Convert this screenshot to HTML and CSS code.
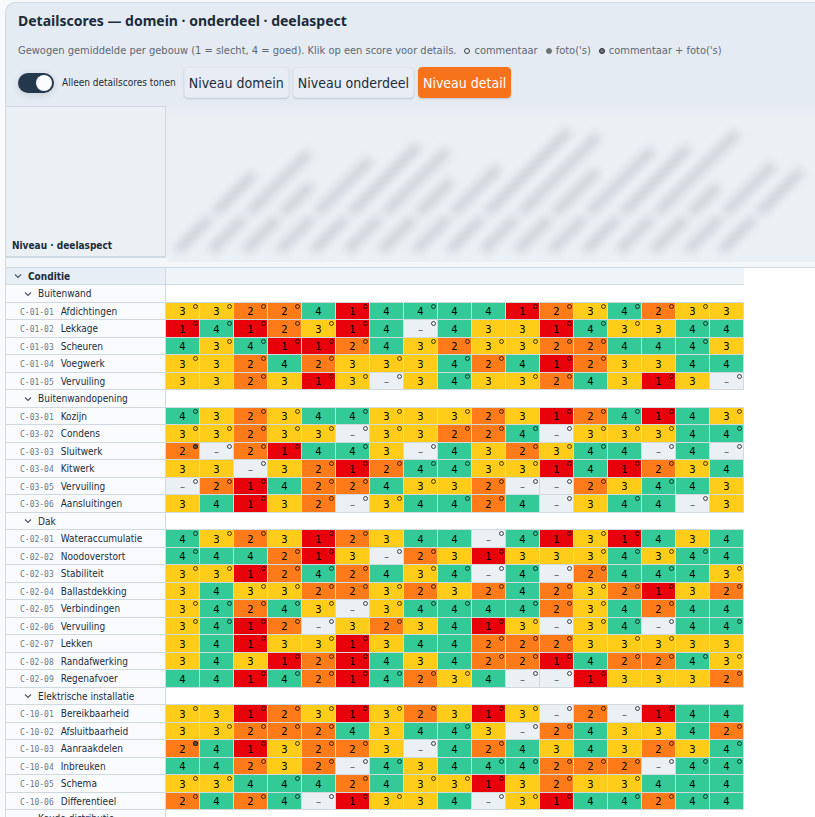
FILE: index.html
```html
<!DOCTYPE html>
<html lang="nl">
<head>
    <meta charset="utf-8">
    <title>Detailscores</title>
    <meta name="viewport" content="width=device-width, initial-scale=1.0">
    <link rel="stylesheet" href="styles.css">
</head>
<body>
    <main class="card">
        <header class="card-head">
            <h1 class="title">Detailscores — domein · onderdeel · deelaspect</h1>
            <p class="intro">
                <span>Gewogen gemiddelde per gebouw (1 = slecht, 4 = goed). Klik op een score voor details.</span>
                <span class="legend"><i class="dot"></i>commentaar</span>
                <span class="legend"><i class="dot dot-photo"></i>foto('s)</span>
                <span class="legend"><i class="dot dot-both"></i>commentaar + foto('s)</span>
            </p>
            <div class="toolbar">
                <label class="switch">
                    <input type="checkbox" checked>
                    Alleen detailscores tonen
                </label>
                <div class="levels">
                    <button type="button" class="level">Niveau domein</button>
                    <button type="button" class="level">Niveau onderdeel</button>
                    <button type="button" class="level active">Niveau detail</button>
                </div>
            </div>
        </header>
        <section class="matrix">
            <div class="matrix-head">
                <div class="corner">Niveau · deelaspect</div>
                <div class="names" id="names" aria-hidden="true"></div>
            </div>
            <table class="scores">
                <colgroup>
                    <col class="col-label">
                    <col span="17" class="col-score">
                </colgroup>
                <tbody id="rows"></tbody>
            </table>
        </section>
    </main>
    <script src="script.js"></script>
</body>
</html>
```

FILE: styles.css
```css
* {
    box-sizing: border-box;
}

body {
    margin: 0;
    padding: 2px 0 0 5px;
    height: 100vh;
    overflow: hidden;
    background: #f8fafc;
    color: #1c2b3a;
    font-family: "DejaVu Sans Condensed", "DejaVu Sans", sans-serif;
    font-stretch: condensed;
}

button,
input {
    font: inherit;
    color: inherit;
    margin: 0;
}

.card {
    height: 100%;
    overflow: hidden;
    background: #e5ebf3;
    border: 1px solid #d1d9e0;
    border-width: 1px 0 0 1px;
    border-top-left-radius: 10px;
}

.card-head {
    padding: 0 12px 8px;
}

.title {
    margin: 0;
    font-family: "Noto Sans", sans-serif;
    font-size: 14px;
    line-height: 35px;
    font-weight: bold;
}

.intro {
    display: flex;
    gap: 8px;
    margin: 0;
    font-size: 11px;
    line-height: 25px;
    color: #5d6773;
    white-space: nowrap;
}

.legend {
    display: flex;
    align-items: center;
    gap: 4px;
}

.dot {
    width: 6px;
    height: 6px;
    border: 1px solid #3a4148;
    border-radius: 50%;
}

.dot-photo {
    background: #6f7479;
    border-color: #6f7479;
}

.dot-both {
    background: #6f7479;
    border-color: #23282d;
}

.toolbar {
    display: flex;
    align-items: center;
    gap: 8px;
    padding-top: 4px;
}

.switch {
    display: flex;
    align-items: center;
    gap: 8px;
    font-size: 10px;
    white-space: nowrap;
}

.switch input {
    appearance: none;
    display: flex;
    width: 36px;
    height: 20px;
    padding: 2px;
    justify-content: flex-end;
    border-radius: 10px;
    background: #24384c;
    box-shadow: 0 2px 6px rgba(36, 56, 76, 0.15);
}

.switch input::before {
    content: "";
    width: 16px;
    height: 16px;
    border-radius: 50%;
    background: #fafcff;
}

.levels {
    display: flex;
    gap: 4px;
}

.level {
    height: 31px;
    padding: 0 4px;
    border: 1px solid #dfe5ee;
    border-radius: 4px;
    background: #e7ecf5;
    box-shadow: 0 1px 2px rgba(28, 43, 58, 0.18);
    font-size: 14px;
    white-space: nowrap;
}

.level.active {
    border-color: #f6731c;
    background: #f6731c;
    color: #fff;
}

.matrix {
    background: #fff;
}

.matrix-head {
    display: flex;
    height: 162px;
    background: linear-gradient(#e5ebf3, #ebf0f4 12px, #ebf0f4 150px, #f3f7fa 154px);
    border-bottom: 1px solid #d1d9e0;
}

.corner {
    display: flex;
    flex: none;
    align-items: flex-end;
    width: 160px;
    height: 152px;
    padding: 0 6px 5px;
    background: #ebf0f4;
    border: 1px solid #d1d9e0;
    border-width: 1px 1px 2px 0;
    font-size: 10px;
    font-weight: bold;
    white-space: nowrap;
}

.names {
    display: flex;
    flex: 1;
    height: 156px;
    margin-left: 2px;
    padding-left: 4px;
    align-items: flex-end;
    background: linear-gradient(#e5ebf3, #ebf0f4 12px);
    overflow: hidden;
}

.name {
    display: flex;
    flex: none;
    gap: 8px;
    width: 34px;
    height: 8px;
    margin-bottom: 10px;
    padding-left: 4px;
    transform: rotate(-45deg);
    transform-origin: 8px 4px;
    filter: blur(5px);
}

.name span {
    flex: none;
    width: 46px;
    height: 8px;
    background: #c6ccd4;
}

.scores {
    width: 738px;
    table-layout: fixed;
    border-collapse: separate;
    border-spacing: 0;
}

.col-label {
    width: 160px;
}

.col-score {
    width: 34px;
}

.scores tr {
    height: 17px;
}

.scores tr:nth-child(even) {
    height: 18px;
}

.scores th,
.scores td {
    padding: 0;
    border-bottom: 1px solid #d1d9e0;
    font-size: 10px;
    line-height: 15px;
    font-weight: normal;
}

.scores th {
    padding-left: 14px;
    border-right: 1px solid #d1d9e0;
    background: #f9fbff;
    text-align: left;
    white-space: nowrap;
}

.scores td {
    position: relative;
    height: 1px;
}

.scores .domain th {
    padding-left: 8px;
    background: #e7eef5;
    font-weight: bold;
}

.scores .domain td {
    background: #eff4f8;
}

.scores .group th {
    padding-left: 18px;
}

.toggle {
    display: flex;
    align-items: center;
    gap: 6px;
    padding: 0;
    border: 0;
    background: none;
    line-height: 15px;
}

.toggle svg {
    width: 8px;
    height: 8px;
    fill: none;
    stroke: #4a5866;
    stroke-width: 1.2;
}

.code {
    margin-right: 7px;
    font-family: "DejaVu Sans Mono", monospace;
    font-size: 8px;
    line-height: 8px;
    color: #6f7883;
}

.scores .score {
    border-right: 1px solid #d1d9e0;
}

.score button {
    display: block;
    width: 100%;
    height: 100%;
    padding: 1px 0 0;
    border: 0;
    background: none;
    font-family: "DejaVu Sans", sans-serif;
    font-stretch: normal;
    line-height: 15px;
    text-align: center;
}

.s1 {
    background: #e8000b;
    color: #000;
}

.s2 {
    background: #ff7b1a;
    color: #000;
}

.s3 {
    background: #ffcc19;
    color: #000;
}

.s4 {
    background: #34ca97;
    color: #000;
}

.s0 {
    background: #ebf0f5;
    color: #4a5866;
}

.mark {
    position: absolute;
    top: 1px;
    right: 1px;
    width: 5px;
    height: 5px;
    border: 1px solid rgba(0, 0, 0, 0.7);
    border-radius: 50%;
}

.mark-both {
    background: rgba(60, 70, 80, 0.8);
}
```

FILE: script.js
```js
// score per gebouw: o = commentaar, * = commentaar + foto('s)
const domain = {
    name: 'Conditie',
    groups: [
        ['Buitenwand', [
            ['C-01-01', 'Afdichtingen', '3o 3o 2o 2o 4 1o 4 4o 4 4 1o 2o 3o 4o 2o 3o 3'],
            ['C-01-02', 'Lekkage', '1o 4o 1o 2o 3o 1o 4 -o 4 3 3 1o 4o 3o 3 4o 4'],
            ['C-01-03', 'Scheuren', '4 3o 4o 1o 1o 2o 4 3o 2o 3o 3o 2o 2o 4 4 4o 3'],
            ['C-01-04', 'Voegwerk', '3o 3 2o 4 2o 3 3o 3 4o 2o 4 1o 2o 3 3 4 4'],
            ['C-01-05', 'Vervuiling', '3 3 2o 3 1o 3o -o 3 4o 3 3o 2o 4 3 1o 3 -o']
        ]],
        ['Buitenwandopening', [
            ['C-03-01', 'Kozijn', '4o 3 2o 3o 4 4o 3o 3 3o 2o 3 1o 2o 4o 1o 4 3o'],
            ['C-03-02', 'Condens', '3o 3o 2o 3o 3o -o 3o 3 2o 2o 4o -o 3o 3o 3o 4 4o'],
            ['C-03-03', 'Sluitwerk', '2* -o 2o 1o 4 4o 3 -o 4 3 2o 3o 4o 4 -o 4 -o'],
            ['C-03-04', 'Kitwerk', '3 3 -o 3 2o 1o 2o 4o 4o 3o 3o 1o 4 1o 2o 3o 4'],
            ['C-03-05', 'Vervuiling', '-o 2o 1o 4 2o 2o 4 3o 3 2o -o -o 2o 3 4o 4 3'],
            ['C-03-06', 'Aansluitingen', '3 4 1o 3 2o -o 3o 4 4o 2o 4 -o 3 4o 4 -o 3']
        ]],
        ['Dak', [
            ['C-02-01', 'Wateraccumulatie', '4o 3o 2o 3 1o 2o 3 4 4 -o 4o 1o 3o 1o 4 3 4'],
            ['C-02-02', 'Noodoverstort', '4o 4 4 2o 1o 3 -o 2o 3 1o 3 3 3o 4o 3o 4o 4'],
            ['C-02-03', 'Stabiliteit', '3o 3o 1o 2o 4o 2o 4 3o 4o -o 4o -o 2o 4 4o 4 3o'],
            ['C-02-04', 'Ballastdekking', '3 4 3o 3o 2o 2o 3o 2o 3 2o 4 2o 3o 2o 1o 3 2o'],
            ['C-02-05', 'Verbindingen', '3o 4o 2o 4o 3o -o 3o 4o 4o 4 4o 2o 3o 4 2o 4 4'],
            ['C-02-06', 'Vervuiling', '3o 4o 1o 2o -o 3 2o 3 4 1o 3o -o 3o 4o -o 4 4o'],
            ['C-02-07', 'Lekken', '3 4 1o 3 3o 1o 3 4 4 2o 2o 2o 3 3o 3o 3 3'],
            ['C-02-08', 'Randafwerking', '3 4 3 1o 2o 1o 4 3 4 2o 2o 1o 4 2o 2o 4o 3o'],
            ['C-02-09', 'Regenafvoer', '4 4 1o 4o 2o 1o 4o 2o 3o 4 -o -o 1o 3 3 3 2o']
        ]],
        ['Elektrische installatie', [
            ['C-10-01', 'Bereikbaarheid', '3o 3 1o 2o 3o 1o 3o 2o 3 1o 3o -o 2o -o 1o 4 4'],
            ['C-10-02', 'Afsluitbaarheid', '3 3o 2o 2o 2o 4 3 4 4o 3 -o 2o 4 3 3 4 2o'],
            ['C-10-03', 'Aanraakdelen', '2* 4 1o 3o 2o 2o 3 -o 4 2o 4 3 4 3 2o 3 4o'],
            ['C-10-04', 'Inbreuken', '4 4 2o 3 2o -o 4o 3 4 4o 4o 2o 2o 2o -o 4o 4o'],
            ['C-10-05', 'Schema', '3o 3o 4 4o 4 2o 4 3o 3o 1o 3 2o 3 3o 4 4 4'],
            ['C-10-06', 'Differentieel', '2o 4 2o 4o -o 1o 3o 3 4 -o 3o 1o 4 4o 2o 4o 4']
        ]],
        ['Koude distributie', []]
    ]
};

const nameWidths = [54, 85, 40, 75, 95, 88, 45, 64, 116, 109, 59, 89, 92, 113, 38, 68, 59];

const chevron = '<svg viewBox="0 0 8 8" aria-hidden="true"><path d="M1 2.5 4 5.5 7 2.5"/></svg>';

function headingRow(cls, name) {
    return `<tr class="${cls}"><th scope="row"><button type="button" class="toggle">${chevron}${name}</button></th><td colspan="17"></td></tr>`;
}

function scoreCell(cell) {
    const value = cell[0];
    const cls = value === '-' ? 's0' : 's' + value;
    let mark = '';
    if (cell[1]) {
        mark = `<i class="mark${cell[1] === '*' ? ' mark-both' : ''}"></i>`;
    }
    return `<td class="score ${cls}"><button type="button">${value === '-' ? '–' : value}</button>${mark}</td>`;
}

function detailRow([code, name, scores]) {
    return `<tr><th scope="row"><span class="code">${code}</span>${name}</th>${scores.split(' ').map(scoreCell).join('')}</tr>`;
}

let html = headingRow('domain', domain.name);
domain.groups.forEach(([name, details]) => {
    html += headingRow('group', name) + details.map(detailRow).join('');
});
document.getElementById('rows').innerHTML = html;

document.getElementById('names').innerHTML = nameWidths
    .map(w => `<div class="name"><span></span><span style="width: ${w}px"></span></div>`)
    .join('');
```
